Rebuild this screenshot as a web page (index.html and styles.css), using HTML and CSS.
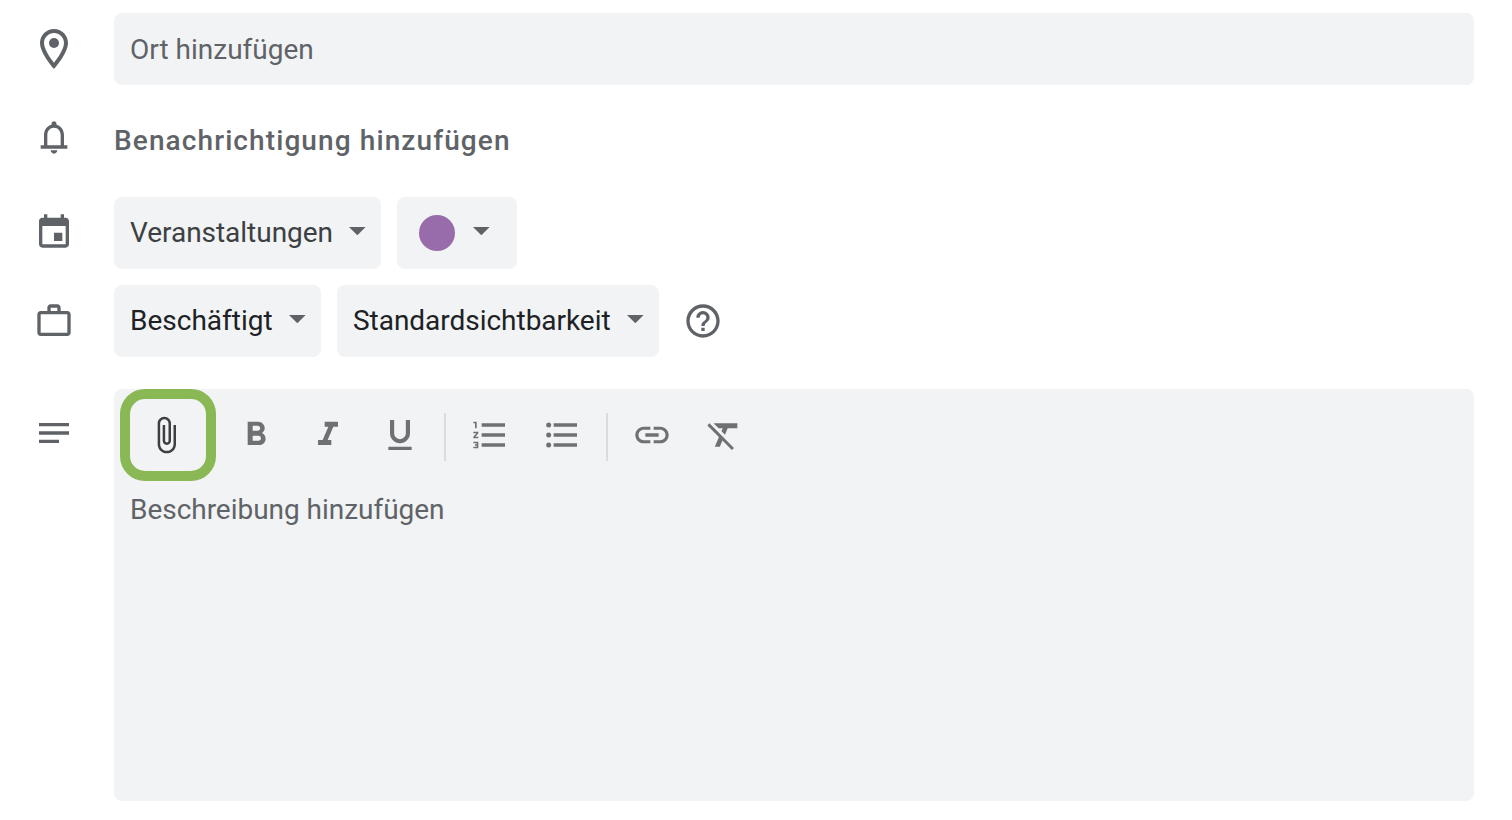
FILE: index.html
```html
<!DOCTYPE html>
<html lang="de">
<head>
<meta charset="utf-8">
<title>Termin</title>
<link rel="stylesheet" href="styles.css">
</head>
<body>
<svg class="defs" aria-hidden="true"><symbol id="arrow" viewBox="7 10 10 5"><path d="M7 10l5 5 5-5z"/></symbol></svg>
<main class="form">
  <div class="row row-place">
    <div class="lead"><svg class="pin" viewBox="0 0 24 24"><path d="M12 2C8.13 2 5 5.13 5 9c0 5.25 7 13 7 13s7-7.75 7-13c0-3.87-3.13-7-7-7zM7 9c0-2.76 2.24-5 5-5s5 2.24 5 5c0 2.88-2.88 7.19-5 9.88C9.92 16.21 7 11.85 7 9z"/><circle cx="12" cy="9" r="2.5"/></svg></div>
    <div class="field place"><span class="t-place">Ort hinzufügen</span></div>
  </div>
  <div class="row row-notify">
    <div class="lead"><svg class="icon bell" viewBox="0 0 24 24"><path d="M18 17v-6c0-3.07-1.63-5.64-4.5-6.32V4c0-.83-.67-1.5-1.5-1.5s-1.5.67-1.5 1.5v.68C7.64 5.36 6 7.92 6 11v6H4v2h16v-2h-2zm-2 0H8v-6c0-2.48 1.51-4.5 4-4.5s4 2.02 4 4.5v6zm-4 5c1.1 0 2-.9 2-2h-4c0 1.1.89 2 2 2z"/></svg></div>
    <div class="notify"><span class="t-notify">Benachrichtigung hinzufügen</span></div>
  </div>
  <div class="row row-calendar">
    <div class="lead"><svg class="icon calendar-icon" viewBox="0 0 24 24"><path d="M19 4h-1V2h-2v2H8V2H6v2H5c-1.11 0-1.99.9-1.99 2L3 20c0 1.1.89 2 2 2h14c1.1 0 2-.9 2-2V6c0-1.1-.9-2-2-2zm0 16H5V9h14v11zM12 13h5v5h-5z"/></svg></div>
    <div class="field select calendar"><span class="t-calendar">Veranstaltungen</span><svg class="arrow"><use href="#arrow"/></svg></div>
    <div class="field select color"><span class="dot"></span><svg class="arrow"><use href="#arrow"/></svg></div>
  </div>
  <div class="row row-status">
    <div class="lead"><svg class="icon" viewBox="0 0 24 24"><path fill-rule="evenodd" d="M20 6h-4V4c0-1.11-.89-2-2-2h-4c-1.11 0-2 .89-2 2v2H4c-1.11 0-1.99.89-1.99 2L2 19c0 1.11.89 2 2 2h16c1.11 0 2-.89 2-2V8c0-1.11-.89-2-2-2zM10 4h4v2h-4V4zM4 8h16v11H4V8z"/></svg></div>
    <div class="field select busy"><span class="t-busy">Beschäftigt</span><svg class="arrow"><use href="#arrow"/></svg></div>
    <div class="field select visibility"><span class="t-visibility">Standardsichtbarkeit</span><svg class="arrow"><use href="#arrow"/></svg></div>
    <svg class="icon help" viewBox="0 0 24 24"><path d="M11 18h2v-2h-2v2zm1-16C6.48 2 2 6.48 2 12s4.480 10 10 10 10-4.480 10-10S17.520 2 12 2zm0 18c-4.410 0-8-3.590-8-8s3.590-8 8-8 8 3.590 8 8-3.590 8-8 8zm0-14c-2.210 0-4 1.790-4 4h2c0-1.100.9-2 2-2s2 .9 2 2c0 2-3 1.750-3 5h2c0-2.250 3-2.500 3-5 0-2.210-1.790-4-4-4z"/></svg>
  </div>
  <div class="row row-description">
    <div class="lead"><svg class="icon lines" viewBox="0 0 24 24"><path d="M3 6h18v2H3zM3 11h18v2H3zM3 16h12v2H3z"/></svg></div>
    <div class="field editor">
      <div class="toolbar">
        <span class="attach"><svg class="icon" viewBox="0 0 24 24"><path d="M16.5 6v11.5c0 2.210-1.790 4-4 4s-4-1.790-4-4V5c0-1.380 1.120-2.500 2.500-2.500s2.500 1.120 2.500 2.500v10.500c0 .55-.45 1-1 1s-1-.45-1-1V6H10v9.500c0 1.380 1.120 2.500 2.500 2.500s2.500-1.120 2.500-2.500V5c0-2.210-1.790-4-4-4S7 2.790 7 5v12.500c0 3.040 2.460 5.500 5.500 5.500s5.500-2.460 5.500-5.500V6h-1.500z"/></svg></span>
        <div class="group text-style">
          <svg class="icon" viewBox="0 0 24 24"><path d="M15.600 10.790c.97-.67 1.650-1.770 1.650-2.790 0-2.260-1.750-4-4-4H7v14h7.040c2.090 0 3.710-1.700 3.710-3.790 0-1.520-.86-2.820-2.150-3.420zM10 6.500h3c.83 0 1.500.67 1.500 1.500s-.67 1.500-1.500 1.500h-3v-3zm3.500 9H10v-3h3.500c.83 0 1.500.67 1.500 1.500s-.67 1.500-1.500 1.500z"/></svg>
          <svg class="icon" viewBox="0 0 24 24"><path d="M10 4v3h2.210l-3.420 8H6v3h8v-3h-2.210l3.420-8H18V4z"/></svg>
          <svg class="icon" viewBox="0 0 24 24"><path d="M12 17c3.310 0 6-2.690 6-6V3h-2.500v8c0 1.930-1.570 3.500-3.500 3.500S8.500 12.930 8.500 11V3H6v8c0 3.310 2.690 6 6 6zm-7 2v2h14v-2H5z"/></svg>
        </div>
        <span class="divider"></span>
        <div class="group">
          <svg class="icon" viewBox="0 0 24 24"><path d="M2 17h2v.5H3v1h1v.5H2v1h3v-4H2v1zm1-9h1V4H2v1h1v3zm-1 3h1.800L2 13.100v.9h3v-1H3.200L5 10.900V10H2v1zm5-6v2h14V5H7zm0 14h14v-2H7v2zm0-6h14v-2H7v2z"/></svg>
          <svg class="icon" viewBox="0 0 24 24"><path d="M7 5h14v2H7zM7 11h14v2H7zM7 17h14v2H7z"/><circle cx="4" cy="6" r="1.5"/><circle cx="4" cy="12" r="1.5"/><circle cx="4" cy="18" r="1.5"/></svg>
        </div>
        <span class="divider"></span>
        <div class="group">
          <svg class="icon" viewBox="0 0 24 24"><path d="M3.900 12c0-1.710 1.390-3.100 3.100-3.100h4V7H7c-2.760 0-5 2.240-5 5s2.240 5 5 5h4v-1.900H7c-1.710 0-3.100-1.390-3.100-3.100zM8 13h8v-2H8v2zm9-6h-4v1.900h4c1.710 0 3.100 1.390 3.100 3.100s-1.390 3.100-3.100 3.100h-4V17h4c2.760 0 5-2.240 5-5s-2.240-5-5-5z"/></svg>
          <svg class="icon" viewBox="0 0 24 24"><path d="M3.270 5L2 6.270l6.970 6.970L6.500 19h3l1.570-3.660L16.730 21 18 19.730 3.550 5.270 3.270 5zM6 5v.18L8.820 8h2.400l-.72 1.680 2.100 2.100L14.210 8H20V5H6z"/></svg>
        </div>
      </div>
      <div class="description"><span class="t-description">Beschreibung hinzufügen</span></div>
    </div>
  </div>
</main>
</body>
</html>
```
FILE: styles.css
```css
* { box-sizing: border-box; }
body {
  margin: 0;
  background: #fff;
  color: #5f6368;
  font: 400 28px/40px Roboto, "Liberation Sans", sans-serif;
  white-space: nowrap;
}
svg { display: block; flex: none; fill: currentColor; }
.defs { width: 0; height: 0; position: absolute; }
.form { padding: 13px 38px 0 0; }
.row { display: flex; height: 72px; }
.lead { flex: none; width: 114px; padding-left: 34px; display: flex; align-items: center; }
.icon { width: 40px; height: 40px; }
.pin { width: 48px; height: 48px; margin-left: -4px; }
.field { background: #f1f3f4; border-radius: 8px; }
.place { flex: 1; padding: 17px 16px 15px; }
.row-notify { height: 40px; margin-top: 36px; }
.bell { margin-top: -8px; }
.notify { font-weight: 500; letter-spacing: 1.1px; }
.row-calendar { margin-top: 36px; }
.calendar-icon { margin-top: -4px; }
.select { display: flex; align-items: center; padding: 0 15px 0 16px; margin-right: 16px; justify-content: space-between; }
.arrow { width: 16.67px; height: 8.33px; margin-top: -3px; color: #5f6368; }
.calendar { width: 267px; color: #3c4043; letter-spacing: -0.03px; }
.color { width: 120px; padding: 0 27px 0 22px; }
.dot { width: 36px; height: 36px; border-radius: 50%; background: #986cab; }
.row-status { margin-top: 16px; align-items: center; }
.row-status .field { height: 72px; color: #202124; }
.busy { width: 207px; }
.visibility { width: 322px; letter-spacing: -0.03px; }
.help { margin-left: 8px; }
.row-description { margin-top: 32px; height: 412px; }
.row-description .lead { align-items: flex-start; padding-top: 24px; }
.editor { flex: 1; }
.toolbar { display: flex; align-items: center; height: 92px; padding-left: 6px; color: #6f7072; }
.attach {
  display: flex;
  align-items: center;
  width: 96px;
  height: 92px;
  padding-left: 16px;
  border: 10px solid #8ab854;
  border-radius: 25px;
  color: #3c4043;
}
.group { display: flex; gap: 32px; }
.text-style { margin-left: 20px; }
.divider { width: 2px; height: 48px; margin: 4px 24px 0; background: #dadce0; }
.description { padding: 9px 16px; letter-spacing: -0.03px; }
```
